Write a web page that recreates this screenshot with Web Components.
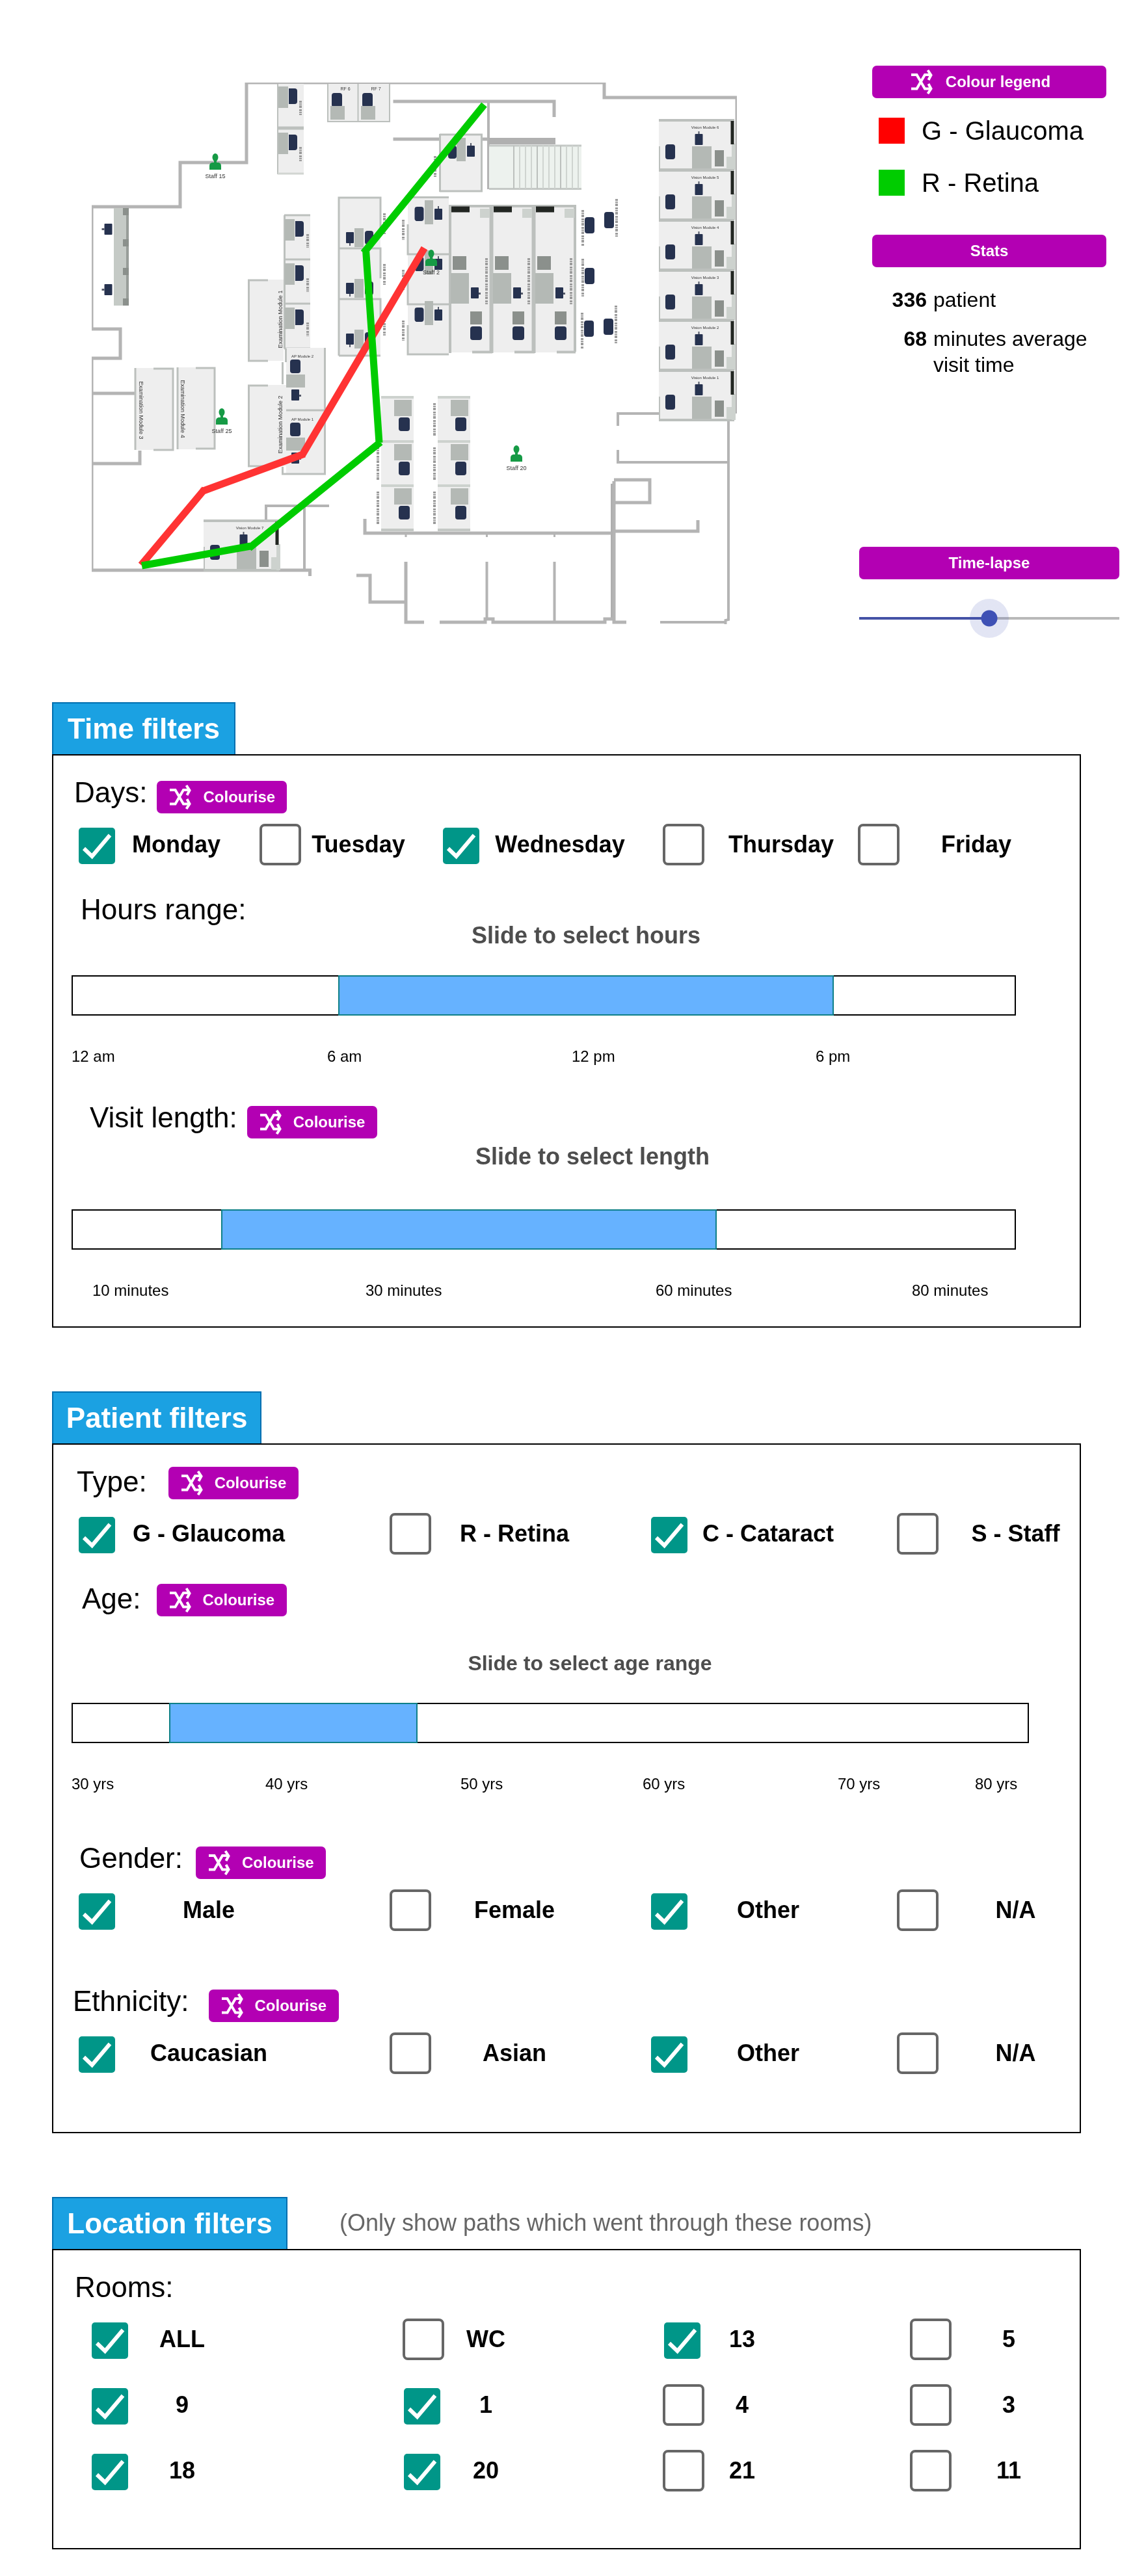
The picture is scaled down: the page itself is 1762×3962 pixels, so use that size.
<!DOCTYPE html>
<html lang="en">
<head>
<meta charset="utf-8">
<title>Patient flow filters</title>
<style>
  body { margin: 0; background: #fff; color: #000; font-family: "Liberation Sans", Arial, sans-serif; }
</style>
</head>
<body>
<flow-page></flow-page>

<script>
const define = (name, css, html, setup) => {
  const template = document.createElement('template');
  template.innerHTML = `<style>*{box-sizing:border-box}${css}</style>${html}`;
  customElements.define(name, class extends HTMLElement {
    constructor() {
      super();
      this.attachShadow({ mode: 'open' }).append(template.content.cloneNode(true));
    }
    connectedCallback() { if (setup) setup(this, this.shadowRoot); }
  });
};

/* ---------- shuffle icon ---------- */
define('shuffle-icon', `
  :host { display: block; width: 33px; height: 38px; }
  svg { display: block; }
`, `<svg width="33" height="38" viewBox="0 0 33 38" fill="none" stroke="#fff" stroke-width="4" aria-hidden="true">
  <path d="M0 8H8.500L21 29.500H29M0 29.500H8.500L21 8H29"/>
  <path d="M25.500 1L30.500 8.500L26.500 16M26.500 22L30.500 29.500L25.500 37"/>
</svg>`);

/* ---------- small purple button ---------- */
define('colourise-button', `
  :host { display: block; margin-top: var(--drop, 7px); }
  button { display: flex; align-items: center; gap: 18px; width: 200px; height: 50px; margin: 0; padding: 0 0 0 20px;
    border: 0; border-radius: 7px; background: #b300b3; color: #fff; font: bold 24px/28px "Liberation Sans", Arial, sans-serif; }
`, `<button type="button"><shuffle-icon></shuffle-icon><span>Colourise</span></button>`);

/* ---------- field heading: caption and what follows it ---------- */
define('field-head', `
  :host { display: flex; align-items: flex-start; gap: var(--gap, 15px); }
  h3 { margin: 0; font-weight: 400; font-size: 44px; line-height: 50px; white-space: nowrap; }
`, `<h3><slot></slot></h3><slot name="action"></slot>`);

/* ---------- tick box ---------- */
define('choice-box', `
  :host { display: block; min-width: 0; }
  label { display: grid; grid-template-columns: 64px 1fr; column-gap: var(--gap, 20px); align-items: center; padding-right: var(--trail, 0px); }
  .box { display: grid; width: 64px; height: 64px; }
  input { appearance: none; grid-area: 1 / 1; margin: 0; width: 64px; height: 64px; border: 4px solid #666; border-radius: 8px; background: #fff; }
  input:checked { width: 56px; height: 56px; margin: 6px 6px 2px 2px; border: 0; border-radius: 5px; background: #009688; }
  svg { grid-area: 1 / 1; margin: 6px 6px 2px 2px; pointer-events: none; display: none; }
  input:checked + svg { display: block; }
  .text { text-align: center; font-size: 36px; line-height: 40px; font-weight: 700; white-space: nowrap; }
`, `<label><span class="box"><input type="checkbox"><svg width="56" height="56" viewBox="0 0 56 56" fill="none" stroke="#fff" stroke-width="6" aria-hidden="true"><path d="M8 32L20.500 44L48 11.500"/></svg></span><span class="text"><slot></slot></span></label>`,
(host, root) => { root.querySelector('input').checked = host.hasAttribute('checked'); });

define('choice-group', `
  :host { display: grid; grid-template-columns: var(--cols); row-gap: 37px; }
`, `<slot></slot>`);

/* ---------- two-ended range ---------- */
define('range-slider', `
  :host { display: block; }
  .caption { padding-left: var(--caption-indent, 130px); text-align: center; font-size: var(--caption-size, 36px); line-height: 30px; font-weight: 700; color: #4d4d4d; }
  .bar { display: grid; height: 62px; margin: var(--caption-gap, 46px) 0 48px; }
  .bar > * { grid-area: 1 / 1; }
  .frame { border: 2px solid #000; }
  .fill { background: #66b2ff; border: 2px solid #0e8088; }
  input { appearance: none; width: 100%; height: 100%; margin: 0; background: transparent; pointer-events: none; }
  input::-webkit-slider-thumb { appearance: none; width: 16px; height: 62px; background: transparent; pointer-events: auto; cursor: ew-resize; }
  .ticks { display: grid; grid-template-columns: var(--ticks); padding-left: var(--ticks-indent, 0px); font-size: 24px; line-height: 30px; white-space: nowrap; }
`, `<div class="caption"><slot></slot></div>
<div class="bar"><div class="frame"></div><div class="fill"></div>
<input type="range" class="low" aria-label="Start"><input type="range" class="high" aria-label="End"></div>
<div class="ticks"></div>`,
(host, root) => {
  const low = root.querySelector('.low'), high = root.querySelector('.high'), fill = root.querySelector('.fill');
  low.step = high.step = 'any';
  low.value = host.getAttribute('low'); high.value = host.getAttribute('high');
  const paint = () => { fill.style.marginLeft = low.value + '%'; fill.style.marginRight = (100 - high.value) + '%'; };
  low.oninput = high.oninput = paint; paint();
  root.querySelector('.ticks').innerHTML = host.getAttribute('labels').split(',').map(t => `<span>${t}</span>`).join('');
});

/* ---------- tabbed filter section ---------- */
define('filter-section', `
  :host { display: block; margin: 0 100px 98px 80px; }
  header { display: flex; align-items: center; gap: 80px; }
  h2 { display: flex; align-items: center; justify-content: center; width: var(--tab-width); height: 80px; margin: 0; border: 2px solid #006eaf; border-bottom: 0;
    background: #1ba1e2; color: #fff; font-size: 44px; line-height: 50px; font-weight: 700; white-space: nowrap; }
  .note { font-size: 36px; line-height: 40px; color: #666; white-space: nowrap; }
  .panel { border: 2px solid #000; padding: 32px 0 var(--end, 40px); }
`, `<header><h2><slot name="tab"></slot></h2><span class="note"><slot name="note"></slot></span></header><div class="panel"><slot></slot></div>`);

/* ---------- floor plan ---------- */
const r = (x, y, w, h, f, rx = 0) => `<rect x="${x}" y="${y}" width="${w}" height="${h}" fill="${f}" rx="${rx}"/>`;
const NAVY = '#28304f', DESK = '#b4b9b5', ROOM = '#eeeeee', EDGE = '#bcc0bd', DARK = '#8b908c';
const line = (d, w = 5, c = '#b4b4b4') => `<path d="${d}" fill="none" stroke="${c}" stroke-width="${w}"/>`;
const scrawl = (x, y1, y2) => `<path d="M${x} ${y1}V${y2}" stroke="#9c9c9c" stroke-width="4" stroke-dasharray="3 1 2 1 4 2" fill="none"/>`;
const seat = (x, y, w, h) => r(x, y, w, h, NAVY, 4);
const stool = (x, y, side) => r(x, y, 12, 17, NAVY, 1) + (side === 'l' ? r(x - 4, y + 7, 4, 3, '#555a6b') : side === 'r' ? r(x + 12, y + 8, 3, 3, '#555a6b') : side === 't' ? r(x + 5, y - 4, 2, 4, '#555a6b') : r(x + 5, y + 17, 2, 4, '#555a6b'));
const tag = (x, y, s, t, rot = 0) => `<text x="${x}" y="${y}" font-size="${s}" text-anchor="middle" fill="#333"${rot ? ` transform="rotate(${rot} ${x} ${y})"` : ''}>${t}</text>`;
const staff = (x, y, t) => `<g fill="#129a45"><ellipse cx="${x}" cy="${y + 6}" rx="4.500" ry="6"/><path d="M${x - 2} ${y + 10}h4v4h3q4 1 4 5v6h-18v-6q0-4 4-5h3z"/></g>` + tag(x, y + 38, 9, t);
const vision = (dx, dy, n) => `<g transform="translate(${dx} ${dy})">` + r(0, 0, 116, 76, ROOM) + line('M0 0H116M0 76H116', 4, EDGE) + line('M1 40V76', 2, EDGE) + r(112, 36, 6, 40, '#cdd2ce') +
  r(110.500, 1, 5, 36, '#222522') + tag(71, 13, 6, 'Vision Module ' + n) + stool(55.500, 21, 't') + r(51, 40, 30, 34, DESK) + r(86, 46, 14, 25, DARK) + r(104, 56, 9, 19, '#cdd2ce') + seat(10, 37, 15, 23) + '</g>';

const planArt = () => {
  let s = '';
  s += line('M476.500 886V877H141V551H185V506H141V318H277V250H379V127H929V150H1133V636');
  s += line('M141 605H208M141 713H215V693', 5);
  s += line('M950 655V636H1015M950 692V711H1120M1120 647V953L1115.500 954V960M1015 957H1117', 4);
  s += line('M944 738H999V773H944M945 817H1073V800', 5) + line('M942.500 744V953', 7, '#aeaeae') + line('M944 740V957H963', 5);
  s += line('M561 798V820H940', 5) + line('M624 820V826M748.500 820V826M852.500 820V826', 3);
  s += line('M548 885H569V926H624M624 864V957H652M676 957H746V952H758V957H930V952H943', 5) + line('M748.500 864V952M852.500 864V957', 4);
  s += line('M409 802V778H506M468 778V877', 4);
  s += line('M604.500 156H852V180M604.500 214H751', 5) + line('M751 156V291', 4) + r(751, 212, 103, 10, '#b0b0b0');
  s += r(752, 223, 142, 68, '#edf2ee') + line('M752 224H894M752 290.500H894', 3, '#c4c8c5');
  for (let i = 0; i < 12; i++) s += line(`M${790 + i * 9} 224V290`, 2, i % 4 ? '#cfd4d0' : '#bcc0bd');
  /* top-left test bays */
  s += r(426, 129, 41, 139, ROOM) + line('M427 129V268', 2, EDGE) + line('M427 197H467', 5, EDGE) + line('M427 267H467', 3, '#d2d5d2');
  [0, 71].forEach(d => s += r(428, 133 + d, 15, 33, DESK) + seat(444, 136 + d, 13, 24) + r(444, 136 + d, 5, 24, NAVY) + scrawl(462, 155 + d, 177 + d));
  s += r(437, 331, 40, 205, ROOM) + line('M437.500 331V536M437 331H477M437 399H477M437 467H477M437 536H477', 3, EDGE);
  [0, 68, 136].forEach(d => s += r(438, 337 + d, 15, 33, DESK) + seat(454, 340 + d, 13, 24) + r(454, 340 + d, 5, 24, NAVY) + scrawl(473, 360 + d, 381 + d));
  s += r(503, 129, 96, 58, ROOM) + line('M504 129V187H599V129M550.500 129V187', 2, EDGE);
  [['6', 0], ['7', 47]].forEach(([n, d]) => s += seat(510 + d, 143, 16, 22) + r(508 + d, 163, 22, 21, DESK) + tag(531 + d, 139, 7, 'RF ' + n));
  /* reception bench */
  s += r(175, 320, 23, 150, '#c5cac6') + r(194, 320, 4, 150, '#989d99');
  [320, 368, 412, 459].forEach(y => s += r(189, y, 9, 11, '#8b908c'));
  s += stool(160.500, 344, 'l') + stool(160.500, 437, 'l');
  /* examination modules */
  s += r(382, 430, 54, 125, ROOM) + line('M412 431H382.500V555H412', 3, EDGE) + tag(434, 491, 9, 'Examination Module 1', -90);
  s += r(382, 592, 58, 125, ROOM) + line('M412 593H382.500V717H412', 3, EDGE);
  s += r(440, 535, 60, 194, ROOM) + line('M434.500 557V591M439.500 536V557M499.500 535V729H434.500V718M440 631H499.500', 3, EDGE) + tag(434, 653, 9, 'Examination Module 2', -90);
  [['2', 0], ['1', 97]].forEach(([n, d]) => s += tag(465, 550 + d, 6, 'AP Module ' + n) + seat(446, 553 + d, 16, 21) + r(440, 576 + d, 29, 20, DESK) + stool(448, 599 + d, 'r'));
  s += r(208, 566, 58, 126, ROOM) + line('M208 566V692', 3, EDGE) + line('M236 567H266V692H236', 3, EDGE) + tag(214, 631, 9, 'Examination Module 3', 90);
  s += r(272, 565, 58, 126, ROOM) + line('M273 565V691', 3, EDGE) + line('M301 566H330V690H301', 3, EDGE) + tag(278, 629, 9, 'Examination Module 4', 90);
  /* centre columns */
  s += r(521, 303, 64, 244, ROOM) + line('M521 547V304H585V350M521 382H585V428M521 460H585V500M521 547H585', 3, EDGE);
  [0, 78, 156].forEach(d => s += stool(532, 357 + d, 'b') + r(545, 351 + d, 14, 29, DESK) + seat(561, 355 + d, 13, 21) + scrawl(591, 328 + d, 360 + d));
  s += r(627, 303, 63, 243, ROOM) + line('M627 345V391H690M627 420V468H690M627 500V545H690M627 303.500H690', 3, EDGE);
  [0, 77, 155].forEach(d => s += seat(637.500, 318 + d, 14, 22) + r(653, 308 + d, 13, 37, DESK) + stool(668, 321 + d, 't') + scrawl(620, 338 + d, 369 + d));
  s += r(676, 206, 65, 89, ROOM) + line('M676.500 206V295M676 207H740.500V294H676', 3, EDGE) + seat(689, 224, 13, 20) + r(702, 212, 14, 36, DESK) + stool(718, 224, 't') + scrawl(669, 240, 272);
  /* lanes */
  s += r(691, 315, 194, 227, ROOM) + line('M692 543V317H884V541', 4, EDGE) + line('M755.500 317V543M820.500 317V543', 6, '#bcc0bd') + line('M726 541.500H757M791 541.500H822M856 541.500H885', 4, EDGE);
  [0, 65, 130].forEach(d => s += r(694 + d, 317.500, 28, 9, '#222522') + r(738 + d, 321, 15, 14, '#cdd2ce') + r(696 + d, 394, 21, 21, DARK) + r(693 + d, 420, 28, 47, DESK) + stool(724 + d, 442, 'r') + r(723 + d, 479, 18, 20, DARK) + seat(723 + d, 502, 18, 21) + scrawl(748 + d, 397, 468));
  [[899, 334], [929, 326], [899, 412], [898, 493], [928, 490]].forEach(([x, y]) => s += seat(x, y, 15, 25));
  [[896, 323, 378], [948, 306, 364], [896, 398, 456], [895, 481, 537], [947, 470, 528]].forEach(a => s += scrawl(...a));
  /* vision modules */
  [6, 5, 4, 3, 2, 1].forEach((n, i) => s += vision(1013, 185 + i * 77, n));
  s += vision(313, 801, 7);
  /* lower columns */
  [586, 673].forEach(x => {
    s += r(x, 611, 50, 205, ROOM);
    [0, 68, 136].forEach(d => s += r(x, 609 + d, 50, 4, '#cdd2ce') + r(x + 20, 615 + d, 27, 25, DESK) + seat(x + 27, 642 + d, 17, 21) + scrawl(x - 5, 620 + d, 672 + d));
    s += r(x, 813, 50, 4, '#c4c8c5');
  });
  s += staff(331, 236, 'Staff 15') + staff(341, 628, 'Staff 25') + staff(794, 685, 'Staff 20') + staff(663, 384, 'Staff 2');
  return s;
};

define('floor-plan', `
  :host { display: block; min-width: 0; }
  svg { display: block; width: 100%; height: auto; font-family: "Liberation Sans", Arial, sans-serif; }
`, `<svg viewBox="0 0 1321 1000" role="img" aria-label="Clinic floor plan with patient paths">
  <defs><filter id="soft" x="0" y="0" width="100%" height="100%"><feGaussianBlur stdDeviation="0.700"/></filter></defs>
  <g filter="url(#soft)">${planArt()}</g>
  <g fill="none" stroke="#ff3333" stroke-width="11"><path d="M652.500 381.500L464 701M468 698L310 756M315 752L217 869"/></g>
  <g fill="none" stroke="#00cc00" stroke-width="11"><path d="M744.500 161L559 389M562.500 384L583 681M585 680L383 843M385 840L218 870"/></g>
</svg>`);

/* ---------- side column ---------- */
define('side-panel', `
  :host { display: block; width: 400px; padding-top: 101px; }
  .inset { margin: 0 20px; }
  .bar { display: flex; align-items: center; justify-content: center; width: 100%; height: 50px; margin: 0; padding: 0; border: 0; border-radius: 7px;
    background: #b300b3; color: #fff; font: bold 24px/28px "Liberation Sans", Arial, sans-serif; }
  .legend { gap: 20px; padding-right: 26px; }
  ul { list-style: none; margin: 30px 0 60px 10px; padding: 0; display: grid; gap: 40px; }
  li { display: flex; align-items: center; gap: 26px; font-size: 40px; line-height: 40px; white-space: nowrap; }
  i { width: 40px; height: 40px; }
  dl { display: grid; grid-template-columns: 84px 1fr; gap: 20px 10px; margin: 30px 0 260px; font-size: 32px; line-height: 40px; }
  dt { text-align: right; font-weight: 700; }
  dd { margin: 0; }
  input { appearance: none; display: block; width: 100%; height: 60px; margin: 30px 0 0; background: transparent; }
  input::-webkit-slider-runnable-track { height: 4px; background: linear-gradient(90deg, #4452a6 50%, #b9b9b9 50%); }
  input::-webkit-slider-thumb { appearance: none; width: 60px; height: 60px; margin-top: -28px; border-radius: 50%;
    background: radial-gradient(circle, #3f51b5 12px, rgba(63, 81, 181, .15) 13px); }
`, `<div class="inset">
  <button type="button" class="bar legend"><shuffle-icon></shuffle-icon><span>Colour legend</span></button>
  <ul><li><i style="background:#f00"></i><span>G - Glaucoma</span></li><li><i style="background:#0c0"></i><span>R - Retina</span></li></ul>
  <h2 class="bar">Stats</h2>
  <dl><dt>336</dt><dd>patient</dd><dt>68</dt><dd>minutes average visit time</dd></dl>
</div>
<label class="bar" for="lapse">Time-lapse</label>
<input id="lapse" type="range" value="50">`);

/* ---------- page ---------- */
define('flow-page', `
  :host { display: block; }
  .top { display: grid; grid-template-columns: 1fr 400px; padding-right: 41px; margin-bottom: 80px; }
  .d1 { margin: 16px 0 43px 37px; --cols: 280fr 280fr 340fr 300fr 341fr; --gap: 12px; }
  .d4 { margin: 16px 0 0 37px; --cols: 480fr 400fr 380fr 281fr; }
  .d4 > :nth-child(1) { --trail: 160px; }
  .d4 > :nth-child(2) { --trail: 100px; }
  .d4 > :nth-child(3) { --gap: 12px; --trail: 92px; }
  .rooms { margin: 23px 0 0 57px; --cols: 480fr 400fr 380fr 261fr; }
  .rooms > :nth-child(4n+1) { --trail: 282px; }
  .rooms > :nth-child(4n+2) { --trail: 228px; }
  .rooms > :nth-child(4n+3) { --trail: 220px; }
  .rooms > :nth-child(4n) { --trail: 41px; }
  range-slider { margin: 0 98px 0 28px; }
  filter-section:last-of-type { margin-bottom: 40px; }
`, `
<div class="top"><floor-plan></floor-plan><side-panel></side-panel></div>

<filter-section style="--tab-width:282px">
  <span slot="tab">Time filters</span>
  <field-head style="margin-left:32px">Days:<colourise-button slot="action"></colourise-button></field-head>
  <choice-group class="d1">
    <choice-box checked style="--trail:52px">Monday</choice-box>
    <choice-box style="--trail:52px">Tuesday</choice-box>
    <choice-box checked style="--trail:52px">Wednesday</choice-box>
    <choice-box style="--trail:12px">Thursday</choice-box>
    <choice-box style="--trail:53px">Friday</choice-box>
  </choice-group>
  <field-head style="margin-left:42px">Hours range:</field-head>
  <range-slider low="28.24" high="80.72" labels="12 am,6 am,12 pm,6 pm" style="--ticks:393fr 376fr 375fr 308fr">Slide to select hours</range-slider>
  <field-head style="margin:54px 0 13px 56px">Visit length:<colourise-button slot="action"></colourise-button></field-head>
  <range-slider low="15.84" high="68.32" labels="10 minutes,30 minutes,60 minutes,80 minutes" style="--ticks:420fr 446fr 394fr 160fr;--ticks-indent:32px;--caption-gap:66px;--caption-indent:150px">Slide to select length</range-slider>
</filter-section>

<filter-section style="--tab-width:322px;--end:89px">
  <span slot="tab">Patient filters</span>
  <field-head style="margin-left:36px;--gap:33px;--drop:2px">Type:<colourise-button slot="action"></colourise-button></field-head>
  <choice-group class="d4" style="margin-top:21px">
    <choice-box checked>G - Glaucoma</choice-box><choice-box>R - Retina</choice-box><choice-box checked>C - Cataract</choice-box><choice-box>S - Staff</choice-box>
  </choice-group>
  <field-head style="margin:43px 0 57px 44px;--gap:24px;--drop:2px">Age:<colourise-button slot="action"></colourise-button></field-head>
  <range-slider low="10.2" high="36.14" labels="30 yrs,40 yrs,50 yrs,60 yrs,70 yrs,80 yrs" style="margin-right:78px;--ticks:298fr 300fr 280fr 300fr 211fr 83fr;--caption-indent:122px;--caption-size:32px">Slide to select age range</range-slider>
  <field-head style="margin:74px 0 0 40px;--gap:20px">Gender:<colourise-button slot="action"></colourise-button></field-head>
  <choice-group class="d4">
    <choice-box checked>Male</choice-box><choice-box>Female</choice-box><choice-box checked>Other</choice-box><choice-box>N/A</choice-box>
  </choice-group>
  <field-head style="margin:83px 0 0 30px;--gap:30px">Ethnicity:<colourise-button slot="action"></colourise-button></field-head>
  <choice-group class="d4">
    <choice-box checked>Caucasian</choice-box><choice-box>Asian</choice-box><choice-box checked>Other</choice-box><choice-box>N/A</choice-box>
  </choice-group>
</filter-section>

<filter-section style="--tab-width:362px;--end:87px">
  <span slot="tab">Location filters</span>
  <span slot="note">(Only show paths which went through these rooms)</span>
  <field-head style="margin-left:33px">Rooms:</field-head>
  <choice-group class="rooms">
    <choice-box checked>ALL</choice-box><choice-box>WC</choice-box><choice-box checked>13</choice-box><choice-box>5</choice-box>
    <choice-box checked>9</choice-box><choice-box checked>1</choice-box><choice-box>4</choice-box><choice-box>3</choice-box>
    <choice-box checked>18</choice-box><choice-box checked>20</choice-box><choice-box>21</choice-box><choice-box>11</choice-box>
  </choice-group>
</filter-section>`);
</script>
</body>
</html>
